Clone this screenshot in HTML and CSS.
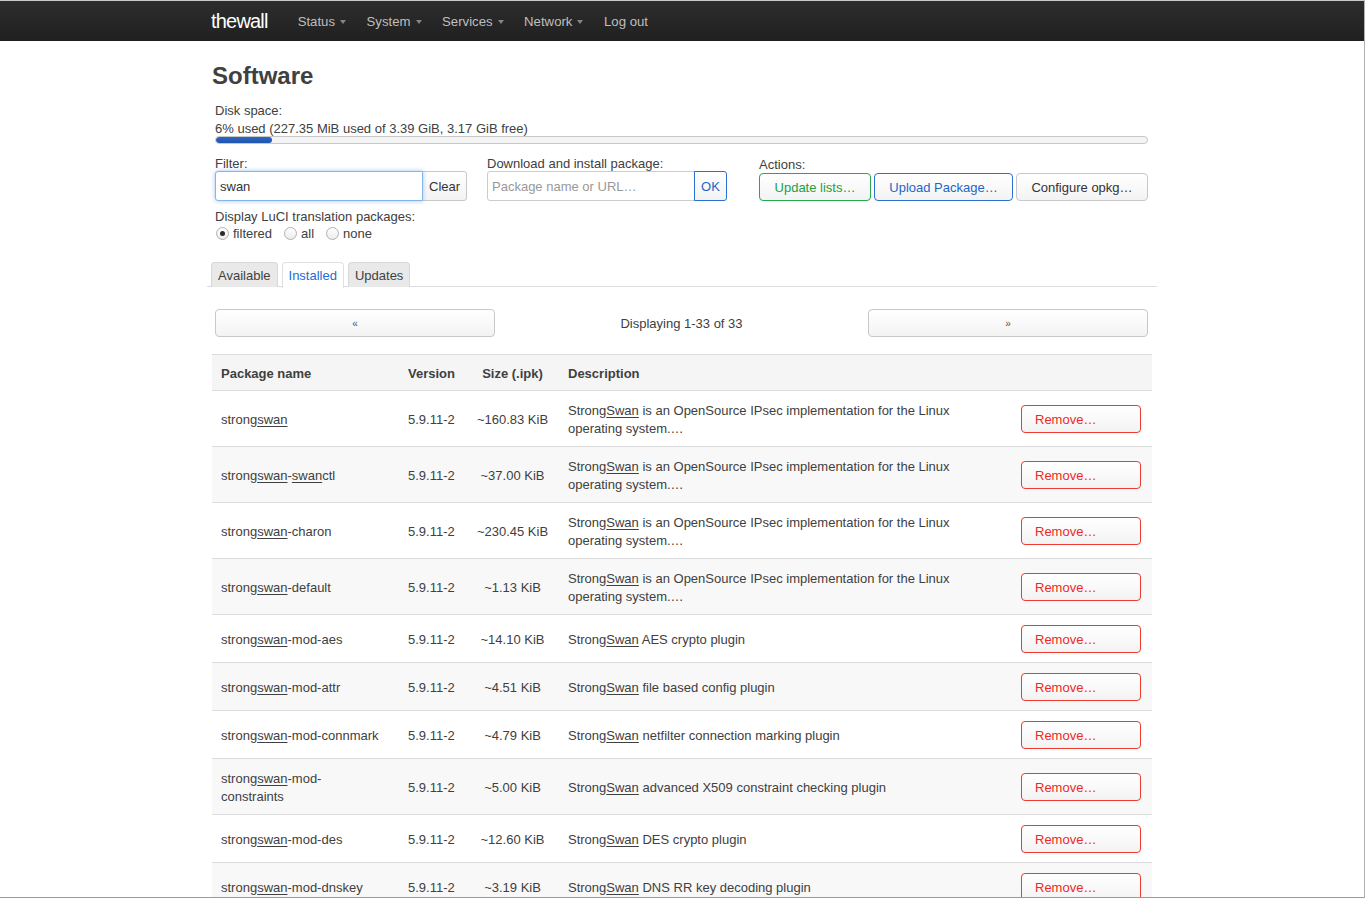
FILE: index.html
```html
<!DOCTYPE html>
<html lang="en">
<head>
<meta charset="utf-8">
<title>thewall - Software</title>
<link rel="stylesheet" href="styles.css">
</head>
<body>
<div class="frame">
  <header class="navbar">
    <div class="container nav-inner">
      <a class="brand">thewall</a>
      <ul class="nav">
        <li><a>Status<span class="caret"></span></a></li>
        <li><a>System<span class="caret"></span></a></li>
        <li><a>Services<span class="caret"></span></a></li>
        <li><a>Network<span class="caret"></span></a></li>
        <li><a>Log out</a></li>
      </ul>
    </div>
  </header>

  <main class="container page">
    <h2 class="title">Software</h2>

    <section class="inset disk">
      <div class="disk-label">Disk space:</div>
      <div class="disk-info">6% used (227.35 MiB used of 3.39 GiB, 3.17 GiB free)</div>
      <div class="progress"><div class="progress-bar" style="width:6%"></div></div>
    </section>

    <section class="inset controls">
      <div class="ctl">
        <div class="ctl-label">Filter:</div>
        <div class="input-group">
          <input class="text-input focused" type="text" value="swan">
          <button class="btn addon">Clear</button>
        </div>
      </div>
      <div class="ctl">
        <div class="ctl-label">Download and install package:</div>
        <div class="input-group">
          <input class="text-input" type="text" placeholder="Package name or URL…">
          <button class="btn addon btn-blue ok">OK</button>
        </div>
      </div>
      <div class="ctl actions">
        <div class="ctl-label">Actions:</div>
        <div class="btn-row">
          <button class="btn btn-green act-update">Update lists…</button>
          <button class="btn btn-blue act-upload">Upload Package…</button>
          <button class="btn act-config">Configure opkg…</button>
        </div>
      </div>
    </section>

    <section class="inset translation">
      <div class="trans-label">Display LuCI translation packages:</div>
      <div class="radios">
        <span class="radio-opt"><span class="radio checked"></span>filtered</span>
        <span class="radio-opt"><span class="radio"></span>all</span>
        <span class="radio-opt"><span class="radio"></span>none</span>
      </div>
    </section>

    <ul class="tabs">
      <li class="tab">Available</li>
      <li class="tab active">Installed</li>
      <li class="tab">Updates</li>
    </ul>

    <div class="inset pager">
      <button class="btn pager-btn">«</button>
      <span class="pager-text">Displaying 1-33 of 33</span>
      <button class="btn pager-btn">»</button>
    </div>

    <table class="pkg-table">
      <colgroup>
        <col class="c-name"><col class="c-ver"><col class="c-size"><col class="c-desc"><col class="c-act">
      </colgroup>
      <thead>
        <tr><th class="name">Package name</th><th>Version</th><th class="size">Size (.ipk)</th><th>Description</th><th></th></tr>
      </thead>
      <tbody>
        <tr><td class="name">strong<u>swan</u></td><td>5.9.11-2</td><td class="size">~160.83 KiB</td><td>Strong<u>Swan</u> is an OpenSource IPsec implementation for the Linux operating system.…</td><td class="act"><button class="btn btn-red">Remove…</button></td></tr>
        <tr><td class="name">strong<u>swan</u>-<u>swan</u>ctl</td><td>5.9.11-2</td><td class="size">~37.00 KiB</td><td>Strong<u>Swan</u> is an OpenSource IPsec implementation for the Linux operating system.…</td><td class="act"><button class="btn btn-red">Remove…</button></td></tr>
        <tr><td class="name">strong<u>swan</u>-charon</td><td>5.9.11-2</td><td class="size">~230.45 KiB</td><td>Strong<u>Swan</u> is an OpenSource IPsec implementation for the Linux operating system.…</td><td class="act"><button class="btn btn-red">Remove…</button></td></tr>
        <tr><td class="name">strong<u>swan</u>-default</td><td>5.9.11-2</td><td class="size">~1.13 KiB</td><td>Strong<u>Swan</u> is an OpenSource IPsec implementation for the Linux operating system.…</td><td class="act"><button class="btn btn-red">Remove…</button></td></tr>
        <tr><td class="name">strong<u>swan</u>-mod-aes</td><td>5.9.11-2</td><td class="size">~14.10 KiB</td><td>Strong<u>Swan</u> AES crypto plugin</td><td class="act"><button class="btn btn-red">Remove…</button></td></tr>
        <tr><td class="name">strong<u>swan</u>-mod-attr</td><td>5.9.11-2</td><td class="size">~4.51 KiB</td><td>Strong<u>Swan</u> file based config plugin</td><td class="act"><button class="btn btn-red">Remove…</button></td></tr>
        <tr><td class="name">strong<u>swan</u>-mod-connmark</td><td>5.9.11-2</td><td class="size">~4.79 KiB</td><td>Strong<u>Swan</u> netfilter connection marking plugin</td><td class="act"><button class="btn btn-red">Remove…</button></td></tr>
        <tr><td class="name">strong<u>swan</u>-mod-constraints</td><td>5.9.11-2</td><td class="size">~5.00 KiB</td><td>Strong<u>Swan</u> advanced X509 constraint checking plugin</td><td class="act"><button class="btn btn-red">Remove…</button></td></tr>
        <tr><td class="name">strong<u>swan</u>-mod-des</td><td>5.9.11-2</td><td class="size">~12.60 KiB</td><td>Strong<u>Swan</u> DES crypto plugin</td><td class="act"><button class="btn btn-red">Remove…</button></td></tr>
        <tr><td class="name">strong<u>swan</u>-mod-dnskey</td><td>5.9.11-2</td><td class="size">~3.19 KiB</td><td>Strong<u>Swan</u> DNS RR key decoding plugin</td><td class="act"><button class="btn btn-red">Remove…</button></td></tr>
      </tbody>
    </table>
  </main>
</div>
</body>
</html>
```

FILE: styles.css
```css
* { box-sizing: border-box; }

html, body {
  margin: 0;
  padding: 0;
  background: #fff;
}

body {
  font-family: "Liberation Sans", Arial, Helvetica, sans-serif;
  font-size: 13px;
  line-height: 18px;
  color: #404040;
}

.frame {
  width: 1365px;
  height: 898px;
  border-top: 1px solid #c9c9c9;
  border-right: 1px solid #b0b0b0;
  border-bottom: 1px solid #9a9a9a;
  overflow: hidden;
}

.container {
  width: 940px;
  margin: 0 auto;
}

/* Navbar */
.navbar {
  height: 40px;
  background: linear-gradient(#2d2d2d, #202020);
}

.nav-inner {
  display: flex;
  align-items: center;
  height: 40px;
}

.brand {
  font-size: 20px;
  color: #fff;
  letter-spacing: -0.8px;
  margin-left: -1px;
  margin-right: 30px;
  line-height: 40px;
}

.nav {
  display: flex;
  gap: 20.5px;
  list-style: none;
  margin: 0;
  padding: 0;
}

.nav a {
  display: flex;
  align-items: center;
  color: #bfbfbf;
  font-size: 13.2px;
  line-height: 40px;
  padding-top: 1px;
}

.caret {
  display: inline-block;
  width: 0;
  height: 0;
  margin-left: 5px;
  border-top: 4px solid #858585;
  border-left: 3.5px solid transparent;
  border-right: 3.5px solid transparent;
}

/* Page */
.title {
  font-size: 24px;
  font-weight: bold;
  line-height: 30px;
  margin: 20px 0 10px;
  color: #404040;
}

.inset {
  padding: 0 4px 0 3px;
}

.disk-label { line-height: 18px; padding-top: 1px; }
.disk-info { line-height: 17px; margin-bottom: -1px; }

.progress {
  height: 8px;
  border: 1px solid #c8c8c8;
  border-radius: 4px;
  background: #f4f4f4;
  overflow: hidden;
}

.progress-bar {
  height: 100%;
  background: linear-gradient(#2f66c2, #1f55b0);
  border-radius: 3px;
}

/* Controls */
.controls {
  display: grid;
  grid-template-columns: 272px 272px 1fr;
  margin-top: 11px;
}

.ctl-label {
  line-height: 16px;
  padding-top: 1px;
  margin-bottom: -1px;
}

.input-group {
  display: flex;
  height: 30px;
}

.text-input {
  width: 208px;
  height: 30px;
  margin: 0;
  padding: 1px 4px 0;
  border: 1px solid #ccc;
  border-radius: 3px 0 0 3px;
  font-family: inherit;
  font-size: 13px;
  color: #333;
  background: #fff;
  outline: none;
}

.text-input::placeholder { color: #999; }

.text-input.focused {
  border-color: #84b5ea;
  box-shadow: 0 0 4px rgba(82, 150, 236, 0.55);
  position: relative;
  z-index: 1;
}

.btn {
  font-family: inherit;
  font-size: 13px;
  line-height: 18px;
  color: #333;
  margin: 0;
  padding: 1px 14px 0;
  height: 28px;
  border: 1px solid #c8c8c8;
  border-radius: 4px;
  background: linear-gradient(#ffffff, #f3f3f3);
  cursor: pointer;
  white-space: nowrap;
}

.addon {
  height: 30px;
  padding: 1px 6px 0;
  border-radius: 0 3px 3px 0;
  margin-left: -1px;
}

.ok {
  width: 33px;
  padding: 1px 0 0;
}

.btn-blue {
  border-color: #2b72d0;
  color: #1f66c8;
}

.btn-green {
  border-color: #23a94e;
  color: #18a044;
}

.btn-red {
  border-color: #ef3a30;
  color: #f02a22;
}

.actions { padding-top: 1px; }

.btn-row {
  display: flex;
  align-items: flex-end;
  gap: 3px;
  height: 29px;
}

.act-update { width: 112px; padding: 1px 0 0; }
.act-upload { width: 139px; padding: 1px 0 0; }
.act-config { width: 132px; padding: 1px 0 0; }

/* Translation radios */
.translation { margin-top: 6px; }

.trans-label { line-height: 17px; padding-top: 1px; margin-bottom: -1px; }

.radios {
  display: flex;
  align-items: center;
  height: 18px;
  padding-top: 1px;
}

.radio-opt {
  display: inline-flex;
  align-items: center;
  margin-right: 11px;
}

.radio {
  width: 13px;
  height: 13px;
  border: 1px solid #b0b0b0;
  border-radius: 50%;
  background: linear-gradient(#ffffff, #ececec);
  margin-right: 4px;
  margin-left: 1px;
  position: relative;
}

.radio.checked::after {
  content: "";
  position: absolute;
  left: 3px;
  top: 3px;
  width: 5px;
  height: 5px;
  border-radius: 50%;
  background: #2a2a2a;
}

/* Tabs */
.tabs {
  display: flex;
  gap: 4px;
  list-style: none;
  margin: 20px -5px 0;
  padding: 0 0 0 4px;
  border-bottom: 1px solid #ddd;
  height: 25px;
}

.tab {
  height: 25px;
  padding: 1px 6px 0;
  line-height: 23px;
  border: 1px solid #d8d8d8;
  border-bottom: none;
  border-radius: 4px 4px 0 0;
  background: #e9e9e9;
  color: #404040;
}

.tab.active {
  background: #fff;
  color: #1c6dd0;
  height: 26px;
  border-color: #e0e0e0;
}

/* Pager */
.pager {
  display: flex;
  justify-content: space-between;
  align-items: center;
  margin-top: 22px;
}

.pager-text { padding-top: 1px; }

.pager-btn {
  width: 280px;
  font-size: 10px;
  color: #555;
  padding: 1px 0 0;
}

/* Table */
.pkg-table {
  width: 940px;
  margin-top: 17px;
  border-collapse: collapse;
  table-layout: fixed;
  border-top: 1px solid #ddd;
}

.c-name { width: 187px; }
.c-ver { width: 74px; }
.c-size { width: 86px; }
.c-desc { width: 453px; }
.c-act { width: 140px; }

.pkg-table th {
  text-align: left;
  font-weight: bold;
  padding: 10px 9px 7px;
  background: #f5f5f5;
  border-bottom: 1px solid #ddd;
}

.pkg-table td {
  padding: 11px 9px 8px;
  border-bottom: 1px solid #ddd;
  vertical-align: middle;
}

.pkg-table tbody tr:nth-child(even) td {
  background: #f8f8f8;
}

.pkg-table .name {
  padding-right: 18px;
}

.pkg-table .size {
  text-align: center;
  white-space: nowrap;
  padding-left: 3px;
  padding-right: 10px;
}

.pkg-table u {
  text-decoration: underline;
  text-underline-offset: 2px;
}

.pkg-table .act {
  padding-top: 10px;
  padding-bottom: 9px;
  padding-right: 11px;
}

.btn-red {
  width: 120px;
  text-align: left;
  padding-left: 13px;
}
```
